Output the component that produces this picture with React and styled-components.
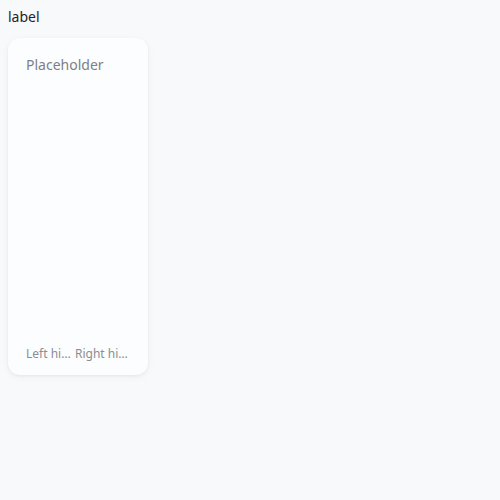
import React from 'react';
import styled, { createGlobalStyle } from 'styled-components';

const GlobalStyle = createGlobalStyle`
  html, body {
    margin: 0;
    background: #f8f9fb;
  }
  body {
    padding: 8px;
    font-family: system-ui, "Noto Sans", sans-serif;
    color: #1f2328;
  }
`;

const Page = styled.div`
  display: flex;
  flex-direction: column;
  align-items: flex-start;
  gap: 12px;
`;

const Label = styled.div`
  font-size: 14px;
  line-height: 18px;
`;

const Card = styled.div`
  box-sizing: border-box;
  width: 140px;
  height: 337px;
  background: #fcfdfe;
  border-radius: 12px;
  box-shadow: 0 1px 3px rgba(20, 30, 50, 0.06), 0 2px 8px rgba(20, 30, 50, 0.04);
  padding: 17px 18px 13px;
  display: flex;
  flex-direction: column;
  justify-content: space-between;
`;

const Placeholder = styled.div`
  font-size: 14px;
  line-height: 20px;
  color: #7d8087;
`;

const Footer = styled.div`
  display: flex;
  gap: 3px;
  font-size: 12px;
  line-height: 16px;
  color: #8a8d93;
`;

const Hint = styled.span`
  max-width: ${({ $max }) => $max}px;
  white-space: nowrap;
  overflow: hidden;
  text-overflow: ellipsis;
`;

export default function App() {
  return (
    <>
      <GlobalStyle />
      <Page>
        <Label>label</Label>
        <Card>
          <Placeholder>Placeholder</Placeholder>
          <Footer>
            <Hint $max={46}>Left hint text</Hint>
            <Hint $max={55}>Right hint text</Hint>
          </Footer>
        </Card>
      </Page>
    </>
  );
}
